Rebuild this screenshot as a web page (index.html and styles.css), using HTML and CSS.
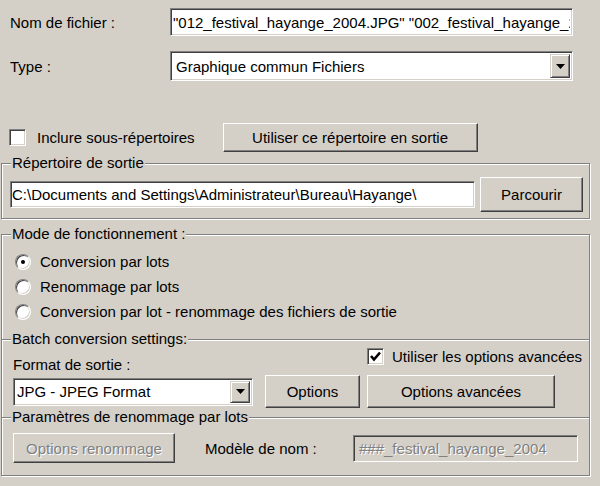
FILE: index.html
```html
<!DOCTYPE html>
<html>
<head>
  <title>Conversion par lots</title>
  <meta charset="UTF-8">
  <link rel="stylesheet" href="styles.css">
</head>
<body>
  <div class="dialog">
    <div class="field-row name-row">
      <label class="field-label">Nom de fichier :</label>
      <input class="edit top-edit" type="text" value='"012_festival_hayange_2004.JPG" "002_festival_hayange_2004.JPG"'>
    </div>

    <div class="field-row type-row">
      <label class="field-label">Type :</label>
      <div class="combo top-combo">
        <span class="combo-text">Graphique commun Fichiers</span>
        <span class="combo-btn"><svg width="9" height="5" viewBox="0 0 9 5"><polygon points="0,0 9,0 4.5,5" fill="#000"/></svg></span>
      </div>
    </div>

    <div class="subdir-row">
      <label class="check"><span class="checkbox"></span>Inclure sous-répertoires</label>
      <button class="btn use-dir">Utiliser ce répertoire en sortie</button>
    </div>

    <fieldset class="group out-dir">
      <legend>Répertoire de sortie</legend>
      <div class="path-row">
        <input class="edit path" type="text" value="C:\Documents and Settings\Administrateur\Bureau\Hayange\">
        <button class="btn browse">Parcourir</button>
      </div>
    </fieldset>

    <fieldset class="group mode">
      <legend>Mode de fonctionnement :</legend>
      <div class="radio-list">
        <label class="radio-item"><span class="radio checked"></span>Conversion par lots</label>
        <label class="radio-item"><span class="radio"></span>Renommage par lots</label>
        <label class="radio-item"><span class="radio"></span>Conversion par lot - renommage des fichiers de sortie</label>
      </div>
    </fieldset>

    <fieldset class="group batch">
      <legend>Batch conversion settings:</legend>
      <div class="batch-top">
        <span class="format-label">Format de sortie :</span>
        <label class="check advanced-check">
          <span class="checkbox"><svg width="15" height="15" viewBox="0 0 15 15"><polyline points="3,7 6,10.5 12,3.5" fill="none" stroke="#000" stroke-width="2.6"/></svg></span>
          Utiliser les options avancées
        </label>
      </div>
      <div class="batch-controls">
        <div class="combo format-combo">
          <span class="combo-text">JPG - JPEG Format</span>
          <span class="combo-btn"><svg width="9" height="5" viewBox="0 0 9 5"><polygon points="0,0 9,0 4.5,5" fill="#000"/></svg></span>
        </div>
        <button class="btn options">Options</button>
        <button class="btn advanced">Options avancées</button>
      </div>
    </fieldset>

    <fieldset class="group rename">
      <legend>Paramètres de renommage par lots</legend>
      <div class="rename-row">
        <button class="btn rename-btn" disabled>Options renommage</button>
        <span class="pattern-label">Modèle de nom :</span>
        <input class="edit pattern" type="text" value="###_festival_hayange_2004" disabled>
      </div>
    </fieldset>
  </div>
</body>
</html>
```

FILE: styles.css
```css
:root {
  --face: #d4d0c8;
  --shadow: #808080;
  --dark: #404040;
  --light: #ffffff;
}

body {
  margin: 0;
  width: 600px;
  height: 486px;
  background-color: var(--face);
  font-family: "Liberation Sans", Arial, sans-serif;
  font-size: 15px;
  color: #000;
  overflow: hidden;
}

.dialog {
  display: flex;
  flex-direction: column;
}

/* top fields */
.field-row {
  display: flex;
  align-items: center;
  padding-left: 10px;
}

.name-row {
  margin-top: 8px;
  height: 28px;
}

.type-row {
  margin-top: 15px;
  height: 30px;
}

.field-label {
  width: 160px;
}

/* sunken edit box */
.edit {
  box-sizing: border-box;
  height: 100%;
  margin: 0;
  padding: 0 2px;
  font: inherit;
  color: #000;
  background-color: #fff;
  border: 1px solid;
  border-color: var(--shadow) var(--light) var(--light) var(--shadow);
  box-shadow: inset 1px 1px var(--dark), inset -1px -1px var(--face);
  outline: none;
}

.top-edit {
  width: 403px;
}

/* combo box */
.combo {
  box-sizing: border-box;
  display: flex;
  align-items: center;
  height: 100%;
  background-color: #fff;
  border: 1px solid;
  border-color: var(--shadow) var(--light) var(--light) var(--shadow);
  box-shadow: inset 1px 1px var(--dark), inset -1px -1px var(--face);
  padding: 2px;
}

.top-combo {
  width: 403px;
}

.combo-text {
  flex: 1;
  padding-left: 3px;
  white-space: nowrap;
  overflow: hidden;
}

.combo-btn {
  box-sizing: border-box;
  width: 20px;
  height: 100%;
  display: flex;
  align-items: center;
  justify-content: center;
  background-color: var(--face);
  border: 1px solid;
  border-color: var(--face) var(--dark) var(--dark) var(--face);
  box-shadow: inset 1px 1px var(--light), inset -1px -1px var(--shadow);
}

/* raised push button */
.btn {
  box-sizing: border-box;
  margin: 0;
  padding: 0;
  font: inherit;
  color: #000;
  background-color: var(--face);
  border: 1px solid;
  border-color: var(--light) var(--dark) var(--dark) var(--light);
  box-shadow: inset -1px -1px var(--shadow);
  border-radius: 0;
}

.btn:disabled {
  color: var(--shadow);
  text-shadow: 1px 1px var(--light);
}

/* checkbox */
.check {
  display: flex;
  align-items: center;
  white-space: nowrap;
}

.checkbox {
  box-sizing: border-box;
  width: 17px;
  height: 17px;
  display: flex;
  align-items: center;
  justify-content: center;
  background-color: #fff;
  border: 1px solid;
  border-color: var(--shadow) var(--light) var(--light) var(--shadow);
  box-shadow: inset 1px 1px var(--dark), inset -1px -1px var(--face);
  margin-right: 11px;
}

.subdir-row {
  display: flex;
  align-items: center;
  margin-top: 42px;
  height: 29px;
  padding-left: 9px;
}

.use-dir {
  margin-left: 28px;
  width: 255px;
  height: 29px;
}

/* etched group boxes */
.group {
  box-sizing: border-box;
  width: 589px;
  margin: 0 0 0 1px;
  padding: 0;
  min-width: 0;
  border: 1px solid var(--shadow);
  box-shadow: inset 1px 1px var(--light), 1px 1px var(--light);
}

.group legend {
  margin-left: 9px;
  padding: 0 1px;
  line-height: 18px;
  background-color: var(--face);
}

.out-dir {
  margin-top: 2px;
}

.path-row {
  display: flex;
  align-items: center;
  height: 35px;
  padding: 5px 0 6px 8px;
}

.path {
  width: 465px;
  height: 27px;
  padding-left: 1px;
}

.browse {
  margin-left: 5px;
  width: 103px;
  height: 35px;
}

.mode {
  margin-top: 6px;
}

.radio-list {
  display: flex;
  flex-direction: column;
  padding: 6px 0 15px 13px;
}

.radio-item {
  display: flex;
  align-items: center;
  height: 25px;
  white-space: nowrap;
}

.radio {
  box-sizing: border-box;
  position: relative;
  width: 16px;
  height: 16px;
  border-radius: 50%;
  background-color: #fff;
  border: 1px solid;
  border-color: var(--shadow) var(--light) var(--light) var(--shadow);
  box-shadow: inset 1px 1px var(--dark), inset -1px -1px var(--face);
  margin-right: 9px;
}

.radio.checked::after {
  content: "";
  position: absolute;
  left: 5px;
  top: 5px;
  width: 4px;
  height: 4px;
  border-radius: 50%;
  background-color: #000;
}

.batch {
  margin-top: -10px;
}

.batch-top {
  display: flex;
  height: 27px;
  padding-left: 11px;
}

.format-label {
  width: 354px;
  align-self: flex-end;
  line-height: 20px;
}

.advanced-check {
  align-self: flex-start;
  height: 17px;
}

.advanced-check .checkbox {
  margin-right: 8px;
}

.batch-controls {
  display: flex;
  align-items: center;
  height: 33px;
  padding: 0 0 9px 11px;
}

.format-combo {
  width: 240px;
  height: 28px;
}

.format-combo .combo-text {
  padding-left: 1px;
}

.options {
  margin-left: 12px;
  width: 95px;
  height: 33px;
}

.advanced {
  margin-left: 7px;
  width: 188px;
  height: 33px;
}

.rename {
  margin-top: -10px;
}

.rename-row {
  display: flex;
  align-items: center;
  height: 30px;
  padding: 7px 11px 12px 11px;
}

.rename-btn {
  width: 162px;
  height: 30px;
}

.pattern-label {
  margin-left: 30px;
}

.pattern {
  margin-left: auto;
  width: 225px;
  height: 27px;
  padding-left: 5px;
  background-color: var(--face);
  color: var(--shadow);
  -webkit-text-fill-color: var(--shadow);
  text-shadow: 1px 1px var(--light);
}
```
